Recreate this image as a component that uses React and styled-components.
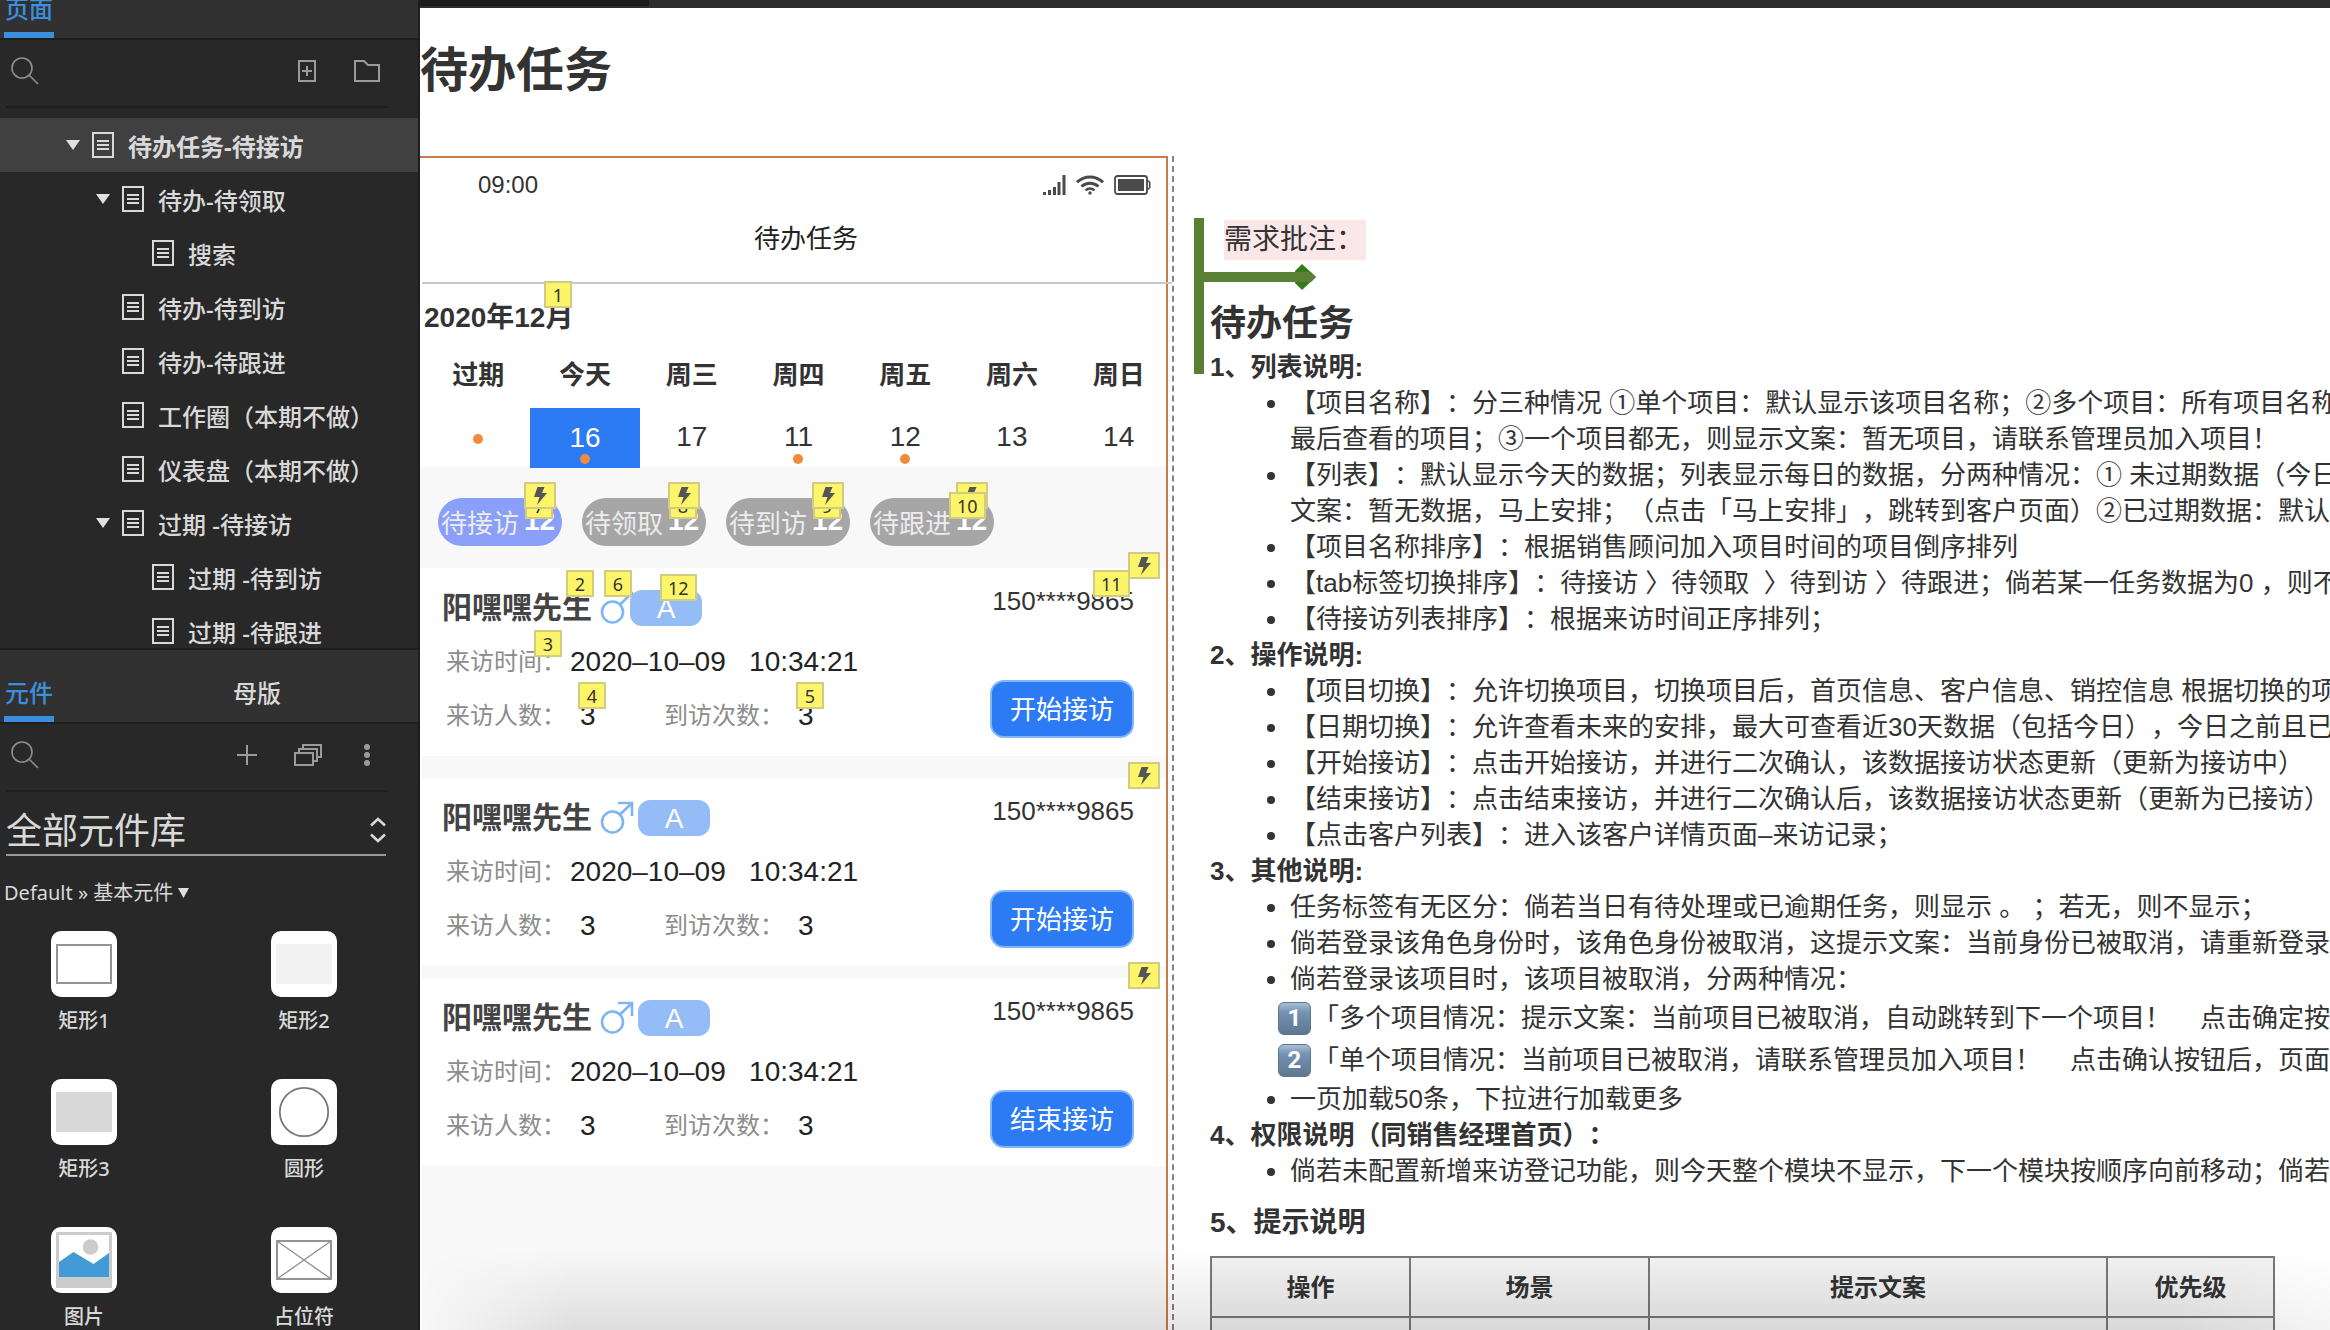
import React, {useState} from 'react';
import styled, {createGlobalStyle} from 'styled-components';

const pages = [
    { name: '待办任务-待接访', level: 0, open: true },
    { name: '待办-待领取', level: 1, open: true },
    { name: '搜索', level: 2 },
    { name: '待办-待到访', level: 1 },
    { name: '待办-待跟进', level: 1 },
    { name: '工作圈（本期不做）', level: 1 },
    { name: '仪表盘（本期不做）', level: 1 },
    { name: '过期 -待接访', level: 1, open: true },
    { name: '过期 -待到访', level: 2 },
    { name: '过期 -待跟进', level: 2 },
]

const widgets = [
    { name: '矩形1', kind: 'outline' },
    { name: '矩形2', kind: 'light' },
    { name: '矩形3', kind: 'grey' },
    { name: '圆形', kind: 'circle' },
    { name: '图片', kind: 'image' },
    { name: '占位符', kind: 'placeholder' },
]

const days = [
    { week: '过期', dot: true },
    { week: '今天', day: '16', dot: true, today: true },
    { week: '周三', day: '17' },
    { week: '周四', day: '11', dot: true },
    { week: '周五', day: '12', dot: true },
    { week: '周六', day: '13' },
    { week: '周日', day: '14' },
]

const filters = [
    { name: '待接访', note: '7', active: true },
    { name: '待领取', note: '8' },
    { name: '待到访', note: '9' },
    { name: '待跟进', note: '10', noteOnTop: true },
]

const visitNotes = [
    { text: '2', x: 144, y: 2 },
    { text: '6', x: 182, y: 2 },
    { text: '12', x: 238, y: 6 },
    { text: '11', x: 671, y: 2 },
    { text: '3', x: 112, y: 62 },
    { text: '4', x: 156, y: 114 },
    { text: '5', x: 374, y: 114 },
]

const visits = [
    { id: 1, action: '开始接访', notes: visitNotes, gap: 22 },
    { id: 2, action: '开始接访', notes: [], gap: 12 },
    { id: 3, action: '结束接访', notes: [], gap: 0 },
]

const SearchIcon = () => (
    <svg width="28" height="28" viewBox="0 0 28 28" fill="none" stroke="#8e8e8e" strokeWidth="1.6">
        <circle cx="11" cy="11" r="10" />
        <path d="M18.5 18.5 L27 27" />
    </svg>
)

const PageIcon = () => (
    <svg width="22" height="26" viewBox="0 0 22 26" fill="none" stroke="#d9d9d9" strokeWidth="2">
        <rect x="1" y="1" width="20" height="24" />
        <path d="M5 9h12M5 13h12M5 17h12" />
    </svg>
)

const AddPageIcon = () => (
    <svg width="18" height="22" viewBox="0 0 18 22" fill="none" stroke="#9b9b9b" strokeWidth="2">
        <rect x="1" y="1" width="16" height="20" />
        <path d="M9 6v10M4 11h10" />
    </svg>
)

const FolderIcon = () => (
    <svg width="26" height="22" viewBox="0 0 26 22" fill="none" stroke="#9b9b9b" strokeWidth="2">
        <path d="M1 1h9l4 4h11v16H1z" />
    </svg>
)

const PlusIcon = () => (
    <svg width="20" height="20" viewBox="0 0 20 20" fill="none" stroke="#9b9b9b" strokeWidth="2">
        <path d="M10 0v20M0 10h20" />
    </svg>
)

const StackIcon = () => (
    <svg width="28" height="22" viewBox="0 0 28 22" fill="none" stroke="#9b9b9b" strokeWidth="2">
        <rect x="1" y="9" width="18" height="12" />
        <path d="M5 9V5h18v12h-4M9 5V1h18v12h-4" />
    </svg>
)

const MoreIcon = () => (
    <svg width="6" height="22" viewBox="0 0 6 22" fill="#9b9b9b">
        <circle cx="3" cy="3" r="3" />
        <circle cx="3" cy="11" r="3" />
        <circle cx="3" cy="19" r="3" />
    </svg>
)

const SortIcon = () => (
    <svg width="16" height="26" viewBox="0 0 16 26" fill="none" stroke="#d9d9d9" strokeWidth="2.6">
        <path d="M1 8.5l7-6.5 7 6.5M1 17.5l7 6.5 7-6.5" />
    </svg>
)

const Triangle = ({size = 14}) => (
    <svg width={size} height="10" viewBox="0 0 14 10" preserveAspectRatio="none" fill="#e0e0e0">
        <path d="M0 0h14L7 10z" />
    </svg>
)

const WidgetIcon = ({kind}) => (
    <svg width="66" height="66" viewBox="0 0 66 66" fill="none">
        <rect width="66" height="66" rx="10" fill="#fff" />
        {kind === 'outline' && <rect x="6" y="14" width="54" height="38" stroke="#949494" strokeWidth="2" />}
        {kind === 'light' && <rect x="5" y="13" width="56" height="40" fill="#f2f2f2" />}
        {kind === 'grey' && <rect x="5" y="13" width="56" height="40" fill="#d7d7d7" />}
        {kind === 'circle' && <circle cx="33" cy="33" r="24.2" stroke="#777" strokeWidth="1.8" />}
        {kind === 'image' && (
            <>
                <rect x="5" y="5" width="56" height="56" fill="#ccc" />
                <rect x="8" y="8" width="50" height="42" fill="#fff" />
                <circle cx="39.5" cy="20" r="7.8" fill="#ccc" />
                <path d="M8 35l14.5-10L42.5 37 58 26v24H8z" fill="#429bd6" />
            </>
        )}
        {kind === 'placeholder' && (
            <g stroke="#949494">
                <rect x="6" y="14" width="54" height="38" strokeWidth="2" />
                <path d="M6 14l54 38M60 14L6 52" strokeWidth="1.4" />
            </g>
        )}
    </svg>
)

const SignalIcon = () => (
    <svg width="23" height="20" viewBox="0 0 23 20" fill="#4a4a4a">
        <path d="M0 17h3v3H0zM5 15h3v5H5zM10 12h3v8h-3zM14.5 7h3v13h-3zM19.5 0h3v20h-3z" />
    </svg>
)

const WifiIcon = () => (
    <svg width="28" height="20" viewBox="0 0 28 20" fill="none" stroke="#4a4a4a" strokeWidth="3">
        <path d="M1 7.2C8.5 .2 19.5 .2 27 7.2" />
        <path d="M5.5 11.5C10.5 7 17.5 7 22.5 11.5" />
        <path d="M9.5 15.4C12.2 13 15.8 13 18.5 15.4" strokeWidth="2.6" />
        <circle cx="14" cy="18" r="1.7" fill="#4a4a4a" stroke="none" />
    </svg>
)

const BatteryIcon = () => (
    <svg width="37" height="20" viewBox="0 0 37 20" fill="none">
        <rect x="1" y="1" width="32" height="18" rx="2.5" stroke="#4a4a4a" strokeWidth="1.8" />
        <rect x="4" y="4" width="26" height="12" fill="#4a4a4a" />
        <path d="M33 5.5c1 .3 2.7 1 2.7 2v5c0 1-1.7 1.7-2.7 2" stroke="#4a4a4a" strokeWidth="1.6" />
    </svg>
)

const MaleIcon = () => (
    <svg width="34" height="34" viewBox="0 0 34 34" fill="none" stroke="#7db6f3" strokeWidth="2.6">
        <circle cx="12.5" cy="21" r="10.5" />
        <path d="M20 13.5L32 2M18 2h14v13" />
    </svg>
)

const BoltIcon = () => (
    <svg width="14" height="18" viewBox="0 0 14 18" fill="#555">
        <path d="M4.5 0h7L9 6h5L4 18l2.5-8H1z" />
    </svg>
)

const Connector = () => (
    <ConnectorSvg width="124" height="156" viewBox="0 0 124 156">
        <path d="M101 53l7-7 14 13-14 13-7-7z" fill="#367a1e" />
        <path d="M0 0h10v54h107l5 5-5 5H10v92H0z" fill="#5a8035" />
    </ConnectorSvg>
)

const Sidebar = () => {
    const [selected, setSelected] = useState(0);
    return (
        <Aside>
            <PageTabs>
                <Tab type="button" $active>页面</Tab>
            </PageTabs>
            <SearchBar>
                <SearchIcon />
                <SearchInput type="search" aria-label="搜索页面" />
                <IconButton type="button" aria-label="添加页面" $space={38}><AddPageIcon /></IconButton>
                <IconButton type="button" aria-label="添加文件夹" $space={8}><FolderIcon /></IconButton>
            </SearchBar>
            <Tree>
                {pages.map((page, index) => (
                    <TreeRow key={page.name}>
                        <TreeButton
                            type="button"
                            $level={page.level}
                            $selected={index === selected}
                            onClick={() => setSelected(index)}
                        >
                            <Arrow>{page.open && <Triangle />}</Arrow>
                            <PageIcon />
                            {page.name}
                        </TreeButton>
                    </TreeRow>
                ))}
            </Tree>
            <LibraryTabs>
                <Tab type="button" $active>元件</Tab>
                <Tab type="button">母版</Tab>
            </LibraryTabs>
            <SearchBar>
                <SearchIcon />
                <SearchInput type="search" aria-label="搜索元件" />
                <IconButton type="button" aria-label="添加元件库" $space={37}><PlusIcon /></IconButton>
                <IconButton type="button" aria-label="元件库列表" $space={42}><StackIcon /></IconButton>
                <IconButton type="button" aria-label="更多" $space={18}><MoreIcon /></IconButton>
            </SearchBar>
            <LibraryPicker>
                <LibrarySelect aria-label="元件库" defaultValue="all">
                    <option value="all">全部元件库</option>
                </LibrarySelect>
                <SortIcon />
            </LibraryPicker>
            <GroupButton type="button">
                Default » 基本元件
                <Triangle size={11} />
            </GroupButton>
            <WidgetGrid>
                {widgets.map(widget => (
                    <Widget key={widget.name}>
                        <WidgetIcon kind={widget.kind} />
                        <span>{widget.name}</span>
                    </Widget>
                ))}
            </WidgetGrid>
        </Aside>
    )
}

const VisitCard = ({visit}) => (
    <Card $gap={visit.gap}>
        <CardHead>
            <Name>阳嘿嘿先生</Name>
            <MaleIcon />
            <Grade $tight={visit.id === 1}>A</Grade>
            <PhoneNumber>150****9865</PhoneNumber>
        </CardHead>
        <CardBody>
            <Facts>
                <Fact>
                    <dt>来访时间：</dt>
                    <DateValue>2020–10–09&nbsp;&nbsp; 10:34:21</DateValue>
                </Fact>
                <Fact>
                    <dt>来访人数：</dt>
                    <CountValue>3</CountValue>
                    <dt>到访次数：</dt>
                    <CountValue>3</CountValue>
                </Fact>
            </Facts>
            <ActionButton type="button">{visit.action}</ActionButton>
        </CardBody>
        {visit.notes.map(note => (
            <Note key={note.text} $x={note.x} $y={note.y}>{note.text}</Note>
        ))}
        <BoltNote $x={706} $y={-16}><BoltIcon /></BoltNote>
    </Card>
)

const Phone = () => (
    <PhoneFrame>
        <StatusBar>
            <span>09:00</span>
            <StatusIcons>
                <SignalIcon />
                <WifiIcon />
                <BatteryIcon />
            </StatusIcons>
        </StatusBar>
        <NavBar>待办任务</NavBar>
        <Month>
            2020年12月
            <Note $x={122} $y={-17}>1</Note>
        </Month>
        <Calendar>
            {days.map(item => <Weekday key={item.week}>{item.week}</Weekday>)}
            {days.map(item => (
                <Day key={item.week} type="button" $today={item.today} aria-label={item.day || item.week}>
                    {item.day}
                    {item.dot && <Dot $inline={!item.day} />}
                </Day>
            ))}
        </Calendar>
        <Filters>
            {filters.map(filter => (
                <Filter key={filter.name} type="button" $active={filter.active}>
                    {filter.name}
                    <strong>12</strong>
                    <Note $x={filter.noteOnTop ? 79 : 87} $y={-6} $top={filter.noteOnTop}>{filter.note}</Note>
                    <BoltNote $x={86} $y={-16}><BoltIcon /></BoltNote>
                </Filter>
            ))}
        </Filters>
        <CardList>
            {visits.map(visit => <VisitCard key={visit.id} visit={visit} />)}
        </CardList>
    </PhoneFrame>
)

const Requirements = () => (
    <Notes>
        <Connector />
        <Tag>需求批注：</Tag>
        <NotesTitle>待办任务</NotesTitle>
        <SectionTitle>1、列表说明:</SectionTitle>
        <Bullets>
            <li>
                【项目名称】：分三种情况 ①单个项目：默认显示该项目名称；②多个项目：所有项目名称<br />
                最后查看的项目；③一个项目都无，则显示文案：暂无项目，请联系管理员加入项目！
            </li>
            <li>
                【列表】：默认显示今天的数据；列表显示每日的数据，分两种情况：① 未过期数据（今日<br />
                文案：暂无数据，马上安排；（点击「马上安排」，跳转到客户页面）②已过期数据：默认
            </li>
            <li>【项目名称排序】：根据销售顾问加入项目时间的项目倒序排列</li>
            <li>【tab标签切换排序】：待接访 〉待领取&nbsp; 〉待到访 〉待跟进；倘若某一任务数据为0 ，则不</li>
            <li>【待接访列表排序】：根据来访时间正序排列；</li>
        </Bullets>
        <SectionTitle>2、操作说明:</SectionTitle>
        <Bullets>
            <li>【项目切换】：允许切换项目，切换项目后，首页信息、客户信息、销控信息 根据切换的项</li>
            <li>【日期切换】：允许查看未来的安排，最大可查看近30天数据（包括今日），今日之前且已</li>
            <li>【开始接访】：点击开始接访，并进行二次确认，该数据接访状态更新（更新为接访中）</li>
            <li>【结束接访】：点击结束接访，并进行二次确认后，该数据接访状态更新（更新为已接访）</li>
            <li>【点击客户列表】：进入该客户详情页面–来访记录；</li>
        </Bullets>
        <SectionTitle>3、其他说明:</SectionTitle>
        <Bullets>
            <li>任务标签有无区分：倘若当日有待处理或已逾期任务，则显示 。 ；若无，则不显示；</li>
            <li>倘若登录该角色身份时，该角色身份被取消，这提示文案：当前身份已被取消，请重新登录</li>
            <li>倘若登录该项目时，该项目被取消，分两种情况：</li>
            <KeycapItem>
                <Keycap>1</Keycap>
                「多个项目情况：提示文案：当前项目已被取消，自动跳转到下一个项目！&nbsp;&nbsp;&nbsp; 点击确定按钮
            </KeycapItem>
            <KeycapItem>
                <Keycap>2</Keycap>
                「单个项目情况：当前项目已被取消，请联系管理员加入项目！&nbsp;&nbsp;&nbsp; 点击确认按钮后，页面返
            </KeycapItem>
            <li>一页加载50条，下拉进行加载更多</li>
        </Bullets>
        <SectionTitle>4、权限说明（同销售经理首页）：</SectionTitle>
        <Bullets>
            <li>倘若未配置新增来访登记功能，则今天整个模块不显示，下一个模块按顺序向前移动；倘若</li>
        </Bullets>
        <TipsTitle>5、提示说明</TipsTitle>
        <TipsTable>
            <colgroup>
                <Col $width={199} />
                <Col $width={239} />
                <Col $width={458} />
                <Col $width={167} />
            </colgroup>
            <thead>
                <tr>
                    <th>操作</th>
                    <th>场景</th>
                    <th>提示文案</th>
                    <th>优先级</th>
                </tr>
            </thead>
            <tbody>
                <tr>
                    <td /><td /><td /><td />
                </tr>
            </tbody>
        </TipsTable>
    </Notes>
)

const App = () => (
    <>
        <GlobalStyle />
        <Layout>
            <Sidebar />
            <Main>
                <TopStrip><OpenTab /></TopStrip>
                <PageTitle>待办任务</PageTitle>
                <Board>
                    <Phone />
                    <Requirements />
                </Board>
                <BottomShade />
            </Main>
        </Layout>
    </>
)

export default App

const GlobalStyle = createGlobalStyle`
    * {
        box-sizing: border-box;
    }
    body {
        margin: 0;
        background: #fff;
        color: #333;
        font-family: "Liberation Sans", "Noto Sans CJK SC", sans-serif;
        text-spacing-trim: space-all;
    }
    button, input, select {
        font-family: inherit;
        text-spacing-trim: inherit;
    }
    h1, h2, h3, ul, dl, dd {
        margin: 0;
        padding: 0;
    }
    svg {
        display: block;
        flex-shrink: 0;
    }
`

const Layout = styled.div`
    display: flex;
    height: 100vh;
    overflow: hidden;
`

const Aside = styled.aside`
    display: flex;
    flex-direction: column;
    flex: 0 0 420px;
    background: #282828;
    border-right: 2px solid #1e1e1e;
    color: #d9d9d9;
    font-family: "Noto Sans", "Noto Sans CJK SC", sans-serif;
    font-weight: 500;
    overflow: hidden;
`

const PageTabs = styled.div`
    display: flex;
    align-items: flex-end;
    flex: 0 0 40px;
    min-height: 0;
    padding-left: 4px;
    background: #313131;
    border-bottom: 2px solid #1e1e1e;
    overflow: hidden;
`

const LibraryTabs = styled(PageTabs)`
    gap: 178px;
    flex-basis: 76px;
    border-top: 2px solid #1e1e1e;
`

const Tab = styled.button`
    width: 50px;
    height: 46px;
    padding: 0 0 6px;
    border: 0;
    border-bottom: 6px solid ${props => props.$active ? '#3b8fdc' : 'transparent'};
    background: none;
    color: ${props => props.$active ? '#3b8fdc' : '#d9d9d9'};
    font-size: 24px;
    font-weight: 500;
    line-height: 34px;
    white-space: nowrap;
`

const SearchBar = styled.div`
    display: flex;
    align-items: center;
    flex: 0 0 68px;
    margin: 0 30px 0 6px;
    padding: 0 0 4px 5px;
    border-bottom: 2px solid #1e1e1e;
`

const SearchInput = styled.input`
    flex: 1;
    min-width: 0;
    border: 0;
    outline: 0;
    background: none;
    color: #d9d9d9;
    font-size: 24px;
`

const IconButton = styled.button`
    display: flex;
    margin: 0 ${props => props.$space}px 0 0;
    padding: 0;
    border: 0;
    background: none;
`

const Tree = styled.ul`
    flex: 0 0 530px;
    margin-top: 10px;
    list-style: none;
    overflow: hidden;
`

const TreeRow = styled.li`
    height: 54px;
`

const TreeButton = styled.button`
    display: flex;
    align-items: center;
    gap: 14px;
    width: 100%;
    height: 54px;
    padding: 0 0 0 ${props => 66 + props.$level * 30}px;
    border: 0;
    background: ${props => props.$selected ? '#404040' : 'none'};
    color: #d9d9d9;
    font-size: 24px;
    font-weight: ${props => props.$selected ? 700 : 500};
    white-space: nowrap;
`

const Arrow = styled.span`
    width: 12px;
`

const LibraryPicker = styled.div`
    display: flex;
    align-items: center;
    flex: 0 0 64px;
    margin: 0 32px 0 6px;
    padding-top: 14px;
    border-bottom: 2px solid #999;
`

const LibrarySelect = styled.select`
    flex: 1;
    appearance: none;
    height: 48px;
    padding: 0;
    border: 0;
    background: none;
    color: #d9d9d9;
    font-size: 36px;
    font-weight: 400;
`

const GroupButton = styled.button`
    display: flex;
    align-items: center;
    gap: 5px;
    margin: 22px 0 23px 4px;
    padding: 0;
    border: 0;
    background: none;
    color: #d9d9d9;
    font-size: 20px;
    font-weight: 400;
    line-height: 30px;
`

const WidgetGrid = styled.div`
    display: grid;
    grid-template-columns: 66px 66px;
    column-gap: 154px;
    padding-left: 51px;
`

const Widget = styled.div`
    display: flex;
    flex-direction: column;
    align-items: center;
    gap: 10px;
    height: 148px;
    font-size: 20px;
    line-height: 28px;
    white-space: nowrap;
`

const Main = styled.main`
    display: flex;
    flex-direction: column;
    flex: 1;
    min-width: 0;
    position: relative;
    overflow: hidden;
`

const TopStrip = styled.div`
    flex: 0 0 8px;
    background: #2e2c2e;
`

const OpenTab = styled.div`
    width: 229px;
    height: 6px;
    background: #1c1c1c;
`

const PageTitle = styled.h1`
    padding: 29px 0 51px;
    font-size: 48px;
    line-height: 68px;
`

const Board = styled.div`
    display: flex;
    flex: 1;
    min-height: 0;
`

const PhoneFrame = styled.section`
    display: flex;
    flex-direction: column;
    flex: 0 0 748px;
    border: solid #cb7a48;
    border-width: 2px 2px 0 0;
`

const StatusBar = styled.div`
    display: flex;
    align-items: center;
    justify-content: space-between;
    height: 54px;
    padding: 0 15px 0 58px;
    font-size: 24px;
`

const StatusIcons = styled.div`
    display: flex;
    gap: 10px;
`

const NavBar = styled.div`
    height: 72px;
    margin: 0 -6px 0 2px;
    padding: 0 0 0 18px;
    border-bottom: 2px solid #c8c8c8;
    color: #222;
    font-size: 26px;
    line-height: 54px;
    text-align: center;
`

const Month = styled.div`
    position: relative;
    margin: 14px 0 17px 2px;
    padding-left: 2px;
    font-size: 28px;
    font-weight: 700;
    line-height: 40px;
`

const Calendar = styled.div`
    display: grid;
    grid-template-columns: repeat(7, 1fr);
    grid-template-rows: 53px 58px;
    margin: 0 -6px 0 5px;
`

const Weekday = styled.div`
    font-size: 26px;
    font-weight: 700;
    line-height: 40px;
    text-align: center;
`

const Day = styled.button`
    display: flex;
    align-items: center;
    justify-content: center;
    position: relative;
    z-index: 1;
    height: ${props => props.$today ? 60 : 58}px;
    margin: ${props => props.$today ? '0 -2px' : '0'};
    padding: 0;
    border: 0;
    background: ${props => props.$today ? '#2d7bf4' : 'none'};
    color: ${props => props.$today ? '#fff' : '#333'};
    font-size: 28px;
`

const Dot = styled.span`
    position: absolute;
    top: ${props => props.$inline ? 26 : 46}px;
    width: 10px;
    height: 10px;
    border-radius: 50%;
    background: #f28a3c;
`

const Filters = styled.div`
    display: flex;
    align-items: flex-start;
    gap: 20px;
    height: 102px;
    padding: 32px 0 0 18px;
    background: #f8f8f8;
`

const Filter = styled.button`
    display: flex;
    align-items: center;
    gap: 5px;
    position: relative;
    width: 124px;
    height: 48px;
    padding: 0 0 2px 3px;
    border: 0;
    border-radius: 24px;
    background: ${props => props.$active ? '#8a9ffa' : '#a6a6a6'};
    color: #ececec;
    font-size: 26px;
    white-space: nowrap;
    strong {
        color: #fff;
        font-size: 28px;
    }
`

const Note = styled.span`
    display: flex;
    align-items: center;
    justify-content: center;
    position: absolute;
    left: ${props => props.$x}px;
    top: ${props => props.$y}px;
    z-index: ${props => props.$top ? 3 : 1};
    min-width: 28px;
    height: 27px;
    padding: 0 6px;
    border: 2px solid #d2cc82;
    background: #fcf56a;
    color: #333;
    font-family: "Noto Sans", sans-serif;
    font-size: 18px;
    font-weight: 400;
    line-height: 22px;
`

const BoltNote = styled(Note)`
    z-index: 2;
    min-width: 32px;
`

const CardList = styled.div`
    flex: 1;
    margin-left: 2px;
    background: #f8f8f8;
`

const Card = styled.article`
    position: relative;
    margin-bottom: ${props => props.$gap}px;
    padding: 22px 32px 18px 20px;
    background: #fff;
`

const CardHead = styled.div`
    display: flex;
    align-items: center;
    height: 36px;
    margin-bottom: 18px;
`

const Name = styled.h3`
    margin-right: 8px;
    color: #444;
    font-size: 30px;
    line-height: 36px;
`

const Grade = styled.span`
    width: 72px;
    height: 36px;
    margin-left: ${props => props.$tight ? -4 : 4}px;
    border-radius: 12px;
    background: #94bcf6;
    color: #fff;
    font-size: 28px;
    line-height: 38px;
    text-align: center;
`

const PhoneNumber = styled.span`
    align-self: flex-start;
    margin-left: auto;
    font-size: 26px;
    line-height: 22px;
`

const CardBody = styled.div`
    display: flex;
    align-items: flex-end;
    justify-content: space-between;
`

const Facts = styled.dl`
    display: grid;
    gap: 18px;
    padding: 0 0 4px 4px;
`

const Fact = styled.div`
    display: flex;
    align-items: center;
    line-height: 36px;
    dt {
        color: #8c8c8c;
        font-size: 24px;
    }
`

const DateValue = styled.dd`
    margin-left: 4px;
    color: #222;
    font-size: 28px;
`

const CountValue = styled.dd`
    width: 84px;
    margin-left: 14px;
    color: #222;
    font-size: 28px;
`

const ActionButton = styled.button`
    width: 144px;
    height: 58px;
    padding: 0 0 4px;
    border: 2px solid #83b6f7;
    border-radius: 14px;
    background: #2d7bf4;
    color: #fff;
    font-size: 26px;
`

const Notes = styled.section`
    flex: 1;
    position: relative;
    min-width: 0;
    margin-left: 4px;
    padding: 64px 0 0 36px;
    border-left: 2px dashed #8f7f7f;
    white-space: nowrap;
`

const ConnectorSvg = styled.svg`
    position: absolute;
    left: 20px;
    top: 62px;
`

const Tag = styled.div`
    width: 142px;
    margin: 0 0 38px 14px;
    background: #fae8e9;
    font-size: 28px;
    line-height: 40px;
`

const NotesTitle = styled.h2`
    margin-bottom: -1px;
    font-size: 36px;
    line-height: 52px;
`

const SectionTitle = styled.h3`
    font-size: 26px;
    line-height: 36px;
`

const Bullets = styled.ul`
    && {
        padding-left: 80px;
    }
    font-size: 26px;
    line-height: 36px;
`

const KeycapItem = styled.li`
    display: flex;
    align-items: center;
    gap: 2px;
    height: 42px;
    margin-left: -12px;
`

const Keycap = styled.span`
    flex: 0 0 33px;
    height: 33px;
    border: 1px solid #5f7690;
    border-radius: 6px;
    background: linear-gradient(#a9bfd6, #7492b3 30%, #5f7690);
    color: #fff;
    font-family: Roboto, sans-serif;
    font-size: 24px;
    font-weight: 700;
    line-height: 31px;
    text-align: center;
`

const TipsTitle = styled.h3`
    margin: 14px 0 13px;
    font-size: 28px;
    line-height: 40px;
`

const TipsTable = styled.table`
    width: 1064px;
    table-layout: fixed;
    border-collapse: collapse;
    th, td {
        height: 60px;
        padding: 0 0 4px;
        border: 2px solid #797979;
        background: #f2f2f2;
        font-size: 24px;
    }
`

const Col = styled.col`
    width: ${props => props.$width}px;
`

const BottomShade = styled.div`
    position: absolute;
    right: 0;
    bottom: 0;
    left: 0;
    z-index: 4;
    height: 80px;
    background: linear-gradient(transparent, rgba(0, 0, 0, 0.1));
    mask-image: linear-gradient(90deg, transparent, #000 8%, #000 92%, rgba(0, 0, 0, 0.4));
    pointer-events: none;
`
